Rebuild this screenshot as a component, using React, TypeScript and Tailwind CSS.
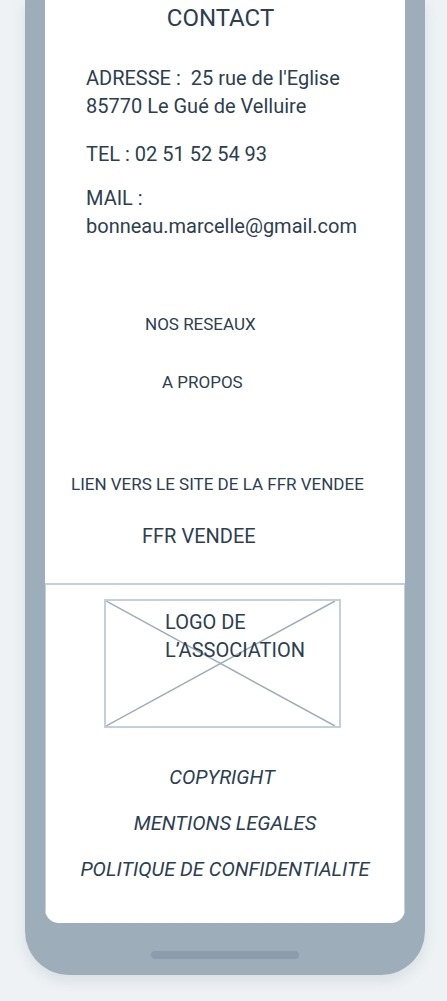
// Mobile wireframe: contact footer of the association site.

const FONT = "font-['Roboto','Liberation_Sans',sans-serif]";

function LogoPlaceholder() {
  return (
    <div className="relative ml-[58px] mt-[14px] h-[129px] w-[237px] border-2 border-[#c3cfd9]">
      <svg className="absolute inset-0 h-full w-full" viewBox="0 0 233 125" preserveAspectRatio="none">
        <line x1="0" y1="0" x2="229" y2="125" stroke="#9eadba" strokeWidth="1.5" />
        <line x1="0" y1="125" x2="229" y2="0" stroke="#9eadba" strokeWidth="1.5" />
      </svg>
      <p className="relative ml-[59px] mt-[7px] text-[20px] leading-[28px]">
        LOGO DE
        <br />
        L’ASSOCIATION
      </p>
    </div>
  );
}

export default function App() {
  return (
    <div className={`min-h-[1001px] bg-[#eef2f5] text-[#2c3e50] ${FONT}`}>
      <div className="ml-[25px] flex w-[400px] flex-col items-center rounded-b-[44px] bg-[#9eadba] px-[20px] shadow-[0_6px_14px_rgba(60,80,100,0.12)]">
        <div className="w-full overflow-hidden rounded-b-[14px] bg-white">
          <div className="h-[583px]">
            <h2 className="pr-[9px] pt-[2px] text-center text-[24px] leading-[32px]">CONTACT</h2>
            <div className="ml-[41px] mt-[30px] text-[20px] leading-[28px]">
              <p>
                ADRESSE :&nbsp; 25 rue de l'Eglise
                <br />
                85770 Le Gué de Velluire
              </p>
              <p className="mt-[20px]">TEL : 02 51 52 54 93</p>
              <p className="mt-[16px]">
                MAIL :
                <br />
                bonneau.marcelle@gmail.com
              </p>
            </div>
            <p className="ml-[100px] mt-[72px] text-[17px] leading-[24px]">NOS RESEAUX</p>
            <p className="ml-[117px] mt-[34px] text-[17px] leading-[24px]">A PROPOS</p>
            <p className="ml-[26px] mt-[78px] text-[17px] leading-[24px]">
              LIEN VERS LE SITE DE LA FFR VENDEE
            </p>
            <p className="ml-[97px] mt-[26px] text-[20px] leading-[28px]">FFR VENDEE</p>
          </div>
          <div className="h-[340px] border-x border-t-2 border-[#c3cfd9]">
            <LogoPlaceholder />
            <ul className="mt-[35px] flex flex-col items-center gap-[18px] text-[20px] italic leading-[28px]">
              <li className="pr-[6px]">COPYRIGHT</li>
              <li>MENTIONS LEGALES</li>
              <li>POLITIQUE DE CONFIDENTIALITE</li>
            </ul>
          </div>
        </div>
        <div className="mb-[16px] mt-[28px] h-[8px] w-[148px] rounded-full bg-[#8c9cab]" />
      </div>
    </div>
  );
}
